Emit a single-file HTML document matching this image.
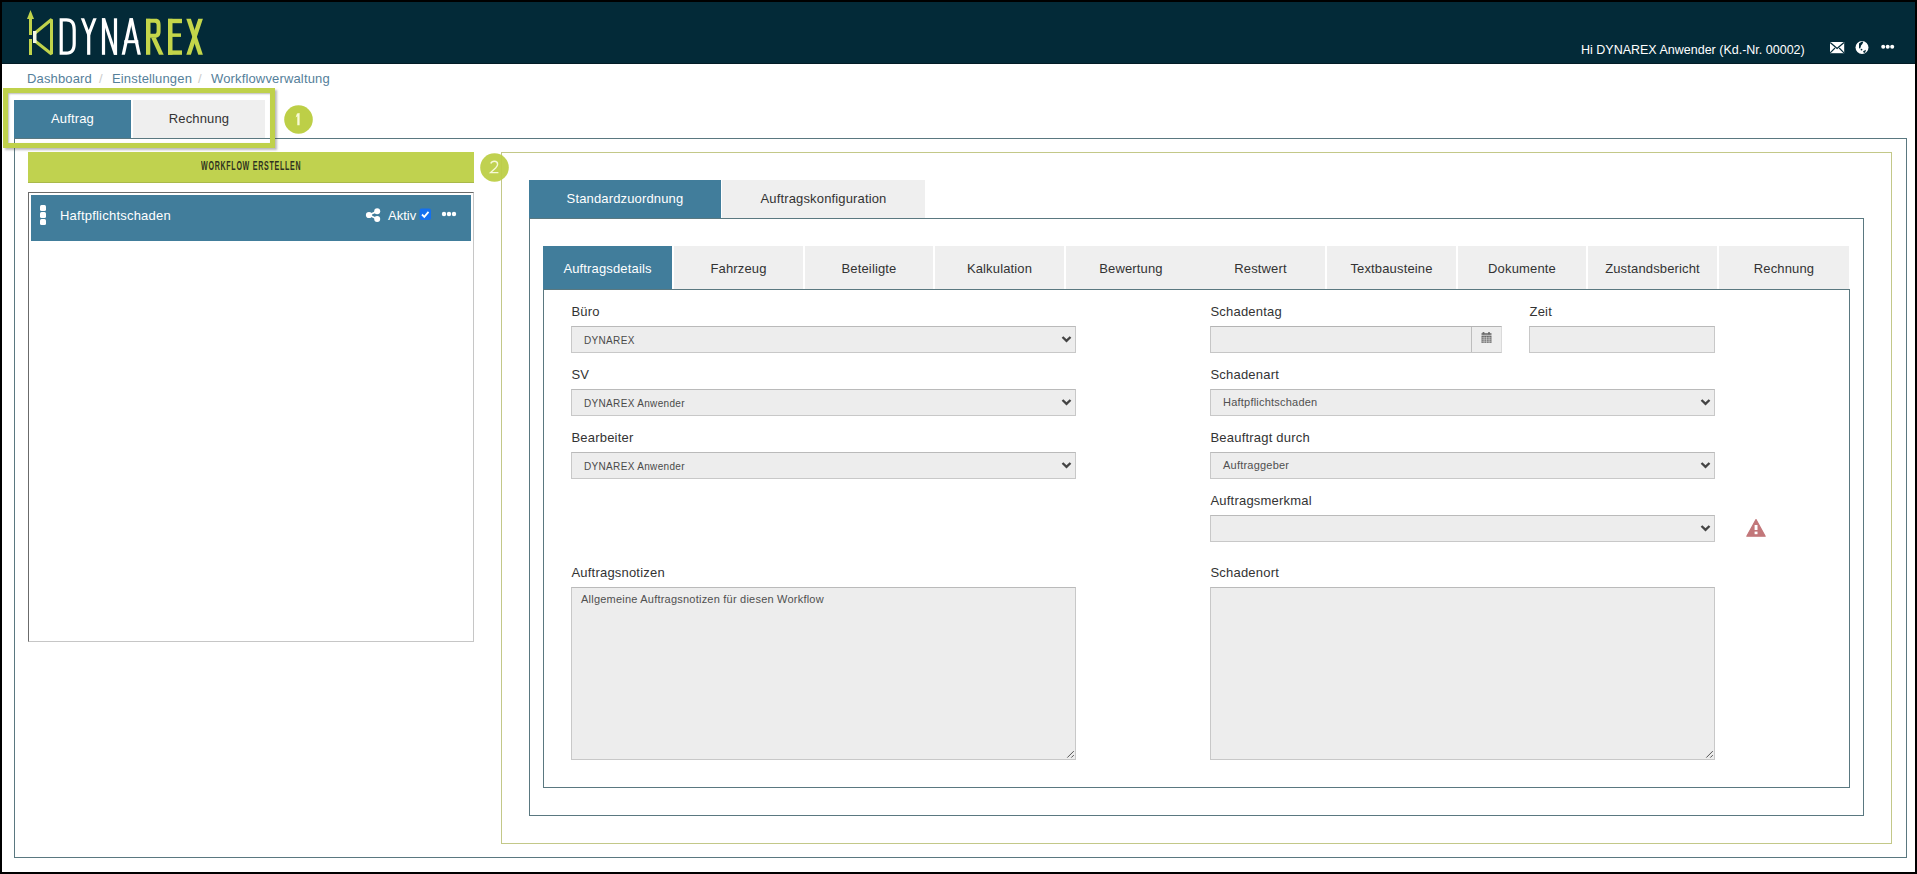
<!DOCTYPE html>
<html><head><meta charset="utf-8">
<style>
*{box-sizing:border-box;margin:0;padding:0}
html,body{width:1917px;height:874px;overflow:hidden;background:#fff;font-family:"Liberation Sans",sans-serif;color:#333;position:relative}
.a{position:absolute}
.frame{left:0;top:0;width:1917px;height:874px;border:2px solid #000;z-index:50;pointer-events:none}
.hdr{left:0;top:0;width:1917px;height:64px;background:#032a38;border-bottom:1px solid #021c26}
.hdrtxt{left:1581px;top:43px;font-size:12.5px;color:#fff;white-space:nowrap}
.bc{top:71px;font-size:13px;color:#55809a;white-space:nowrap;letter-spacing:.15px}
.bcs{top:71px;font-size:13px;color:#ccc}
.tab{font-size:13px;text-align:center;white-space:nowrap;letter-spacing:.15px}
.act{background:#417d9b;color:#fff}
.ina{background:#efefef;color:#333}
.pnl{border:1px solid #5a7880}
.lbl{font-size:13px;color:#333;white-space:nowrap;margin-left:.5px;letter-spacing:.2px}
.sel{background:#ededed;border:1px solid #c8c8c8;border-top-color:#bababa}
.seltxt{font-size:10px;color:#4a4a4a;white-space:nowrap;margin-top:1px;letter-spacing:.33px}
.seltxt2{font-size:11px;color:#505050;white-space:nowrap;letter-spacing:.22px}
.badge{width:29px;height:29px;border-radius:50%;background:#bdcf47;color:#f6f9d8;font-size:17px;text-align:center;line-height:29px}
</style></head><body>
<div class="a frame"></div>
<div class="a hdr"></div>
<!-- logo -->
<svg class="a" style="left:0;top:0" width="220" height="64" viewBox="0 0 220 64">
  <g stroke="#c0d34b" fill="none" stroke-width="3" stroke-linejoin="bevel">
    <line x1="30.5" y1="17" x2="30.5" y2="55"/>
    <polyline points="35,33 51.5,19.5 51.5,54 35,41"/>
  </g>
  <polygon points="30.5,10 27,19 34,19" fill="#c0d34b"/>
  <rect x="29" y="35" width="3" height="4" fill="#032a38"/>
  <rect x="33" y="31" width="3.5" height="12" fill="#f4f6e6"/>
  <defs><clipPath id="lc"><rect x="0" y="18.3" width="220" height="36.5"/></clipPath></defs>
  <g fill="#fff">
    <path fill-rule="evenodd" d="M59.6 18.3 H66.5 C73 18.3 75.8 22.5 75.8 29.5 V43.5 C75.8 50.5 73 54.8 66.5 54.8 H59.6 Z M62.8 21.5 H66.2 C71 21.5 72.6 24.3 72.6 30 V43 C72.6 48.8 71 51.6 66.2 51.6 H62.8 Z"/>
    <rect x="87.1" y="33" width="3.2" height="21.8"/>
    <polygon points="101.9,18.3 105.1,18.3 117.1,54.8 113.9,54.8"/>
    <rect x="101.9" y="18.3" width="3.2" height="36.5"/>
    <rect x="113.9" y="18.3" width="3.2" height="36.5"/>
    <polygon points="121.6,54.8 124.9,54.8 132.9,18.3 129.6,18.3"/>
    <polygon points="129.6,18.3 132.9,18.3 140.9,54.8 137.6,54.8"/>
    <rect x="124.3" y="40.2" width="14" height="3"/>
  </g>
  <g clip-path="url(#lc)" stroke="#fff" stroke-width="3.2" fill="none">
    <path d="M80.9 14 L88.7 34.5 L96.6 14"/>
  </g>
  <g fill="#c4d64a">
    <path fill-rule="evenodd" d="M146 18.8 H155.5 C159.5 18.8 160.6 21.3 160.6 25.3 V31.3 C160.6 35.5 159 37.8 155 37.8 H146 Z M150.3 22.8 H154.6 C156.2 22.8 156.6 23.6 156.6 25.5 V31 C156.6 33 156 33.8 154.4 33.8 H150.3 Z"/>
    <rect x="146" y="18.8" width="4.3" height="36"/>
    <polygon points="151.2,37.8 155.7,37.2 163.7,54.8 159,54.8"/>
    <rect x="168" y="18.8" width="4.5" height="36"/>
    <rect x="168" y="18.8" width="14" height="4.4"/>
    <rect x="168" y="33.4" width="13" height="3.5"/>
    <rect x="168" y="50.4" width="14" height="4.4"/>
    <polygon points="186.3,18.8 190.9,18.8 202.9,54.8 198.3,54.8"/>
    <polygon points="198.3,18.8 202.9,18.8 190.9,54.8 186.3,54.8"/>
  </g>
</svg>
<div class="a hdrtxt">Hi DYNAREX Anwender (Kd.-Nr. 00002)</div>
<!-- header icons -->
<svg class="a" style="left:1825px;top:35px" width="75" height="25" viewBox="0 0 75 25">
  <rect x="5" y="7" width="14.2" height="11.2" fill="#fff"/>
  <polyline points="5.2,7.4 12.1,13.4 19,7.4" fill="none" stroke="#032a38" stroke-width="1.3"/>
  <line x1="5.2" y1="17.8" x2="10" y2="13" stroke="#032a38" stroke-width="1.1"/>
  <line x1="19" y1="17.8" x2="14.2" y2="13" stroke="#032a38" stroke-width="1.1"/>
  <circle cx="37" cy="12.5" r="6.5" fill="#fff"/>
  <path d="M34 8.5 L36.2 7 L37.2 6.2 L38.2 7.6 L37 9.5 L36.2 10.2 L35.2 13.6 L34 13.2 Z" fill="#032a38"/>
  <circle cx="36.5" cy="14.6" r="0.9" fill="#032a38"/>
  <path d="M38 16.2 L41 14.8 L40.2 17.6 L39 18 Z" fill="#032a38"/>
  <circle cx="58.2" cy="11.7" r="2" fill="#fff"/><circle cx="62.7" cy="11.7" r="2" fill="#fff"/><circle cx="67.2" cy="11.7" r="2" fill="#fff"/>
</svg>

<!-- breadcrumb -->
<div class="a bc" style="left:27px">Dashboard</div>
<div class="a bcs" style="left:99px">/</div>
<div class="a bc" style="left:112px">Einstellungen</div>
<div class="a bcs" style="left:198px">/</div>
<div class="a bc" style="left:211px">Workflowverwaltung</div>

<!-- outer main panel -->
<div class="a pnl" style="left:14px;top:138px;width:1893px;height:720px"></div>
<!-- top tabs -->
<div class="a tab act" style="left:14px;top:100px;width:117px;height:38px;line-height:38px">Auftrag</div>
<div class="a tab ina" style="left:133px;top:100px;width:132px;height:38px;line-height:38px">Rechnung</div>
<!-- annotation box 1 -->
<div class="a" style="left:3px;top:88px;width:272px;height:60px;border:5px solid #bfd14b;box-shadow:2px 2px 2px rgba(60,60,60,.35), inset 1px 1px 2px rgba(0,0,0,.28)"></div>
<svg class="a" style="left:284px;top:105px" width="29" height="29" viewBox="0 0 29 29"><circle cx="14.5" cy="14.5" r="14.3" fill="#bdcf47"/><path d="M13 8.6 L15.6 8 V20.2 H13.3 V11.2 L11.6 12.4 Z" fill="#f8fbd6"/></svg>

<!-- left column -->
<div class="a" style="left:28px;top:152px;width:446px;height:31px;background:#c0d24f;border-bottom:1px solid #a9b94a"></div>
<div class="a" style="left:201px;top:159px;font-size:12.5px;font-weight:bold;color:#2f3320;white-space:nowrap;letter-spacing:1.3px;transform-origin:0 0;transform:scaleX(.565)">WORKFLOW ERSTELLEN</div>
<div class="a" style="left:28px;top:192px;width:446px;height:450px;border:1px solid;border-color:#6b6b6b #c6c6c6 #c6c6c6 #6b6b6b"></div>
<div class="a" style="left:31px;top:195px;width:440px;height:46px;background:#417d9b"></div>
<div class="a" style="left:40px;top:205px;width:6px;height:6px;background:#fff;border-radius:1.5px"></div>
<div class="a" style="left:40px;top:212px;width:6px;height:6px;background:#fff;border-radius:1.5px"></div>
<div class="a" style="left:40px;top:219px;width:6px;height:6px;background:#fff;border-radius:1.5px"></div>
<div class="a" style="left:60px;top:208px;font-size:13px;color:#fff;white-space:nowrap;letter-spacing:.22px">Haftpflichtschaden</div>
<svg class="a" style="left:364px;top:206px" width="18" height="17" viewBox="0 0 18 17">
  <g fill="#fff"><circle cx="13.2" cy="5.3" r="3"/><circle cx="5" cy="9" r="3.1"/><circle cx="13.2" cy="12.9" r="3"/></g>
  <g stroke="#fff" stroke-width="1.7"><line x1="5" y1="9" x2="13.2" y2="5.3"/><line x1="5" y1="9" x2="13.2" y2="12.9"/></g>
</svg>
<div class="a" style="left:388px;top:208px;font-size:13px;color:#fff;white-space:nowrap">Aktiv</div>
<svg class="a" style="left:419px;top:208px" width="13" height="13" viewBox="0 0 13 13">
  <rect x="0.5" y="0.5" width="11.5" height="11.5" rx="2" fill="#1570ef"/>
  <polyline points="3,6.5 5.3,8.8 9.5,3.8" fill="none" stroke="#fff" stroke-width="1.8"/>
</svg>
<svg class="a" style="left:440px;top:210px" width="18" height="8" viewBox="0 0 18 8">
  <g fill="#fff"><circle cx="4" cy="4" r="2.2"/><circle cx="9" cy="4" r="2.2"/><circle cx="14" cy="4" r="2.2"/></g>
</svg>

<!-- annotation box 2 -->
<div class="a" style="left:501px;top:152px;width:1391px;height:692px;border:1px solid #c3c888"></div>
<svg class="a" style="left:480px;top:153px" width="29" height="29" viewBox="0 0 29 29"><circle cx="14.5" cy="14.5" r="14.3" fill="#bdcf47" fill-opacity=".95"/><path d="M10.8 10.6 Q11.6 8.3 14.3 8.3 Q17.6 8.3 17.6 11.2 Q17.6 13 15.6 15 L10.6 19.6 H18.4" fill="none" stroke="#f6f9d8" stroke-width="1.4"/></svg>

<!-- inner tab panel -->
<div class="a pnl" style="left:529px;top:218px;width:1335px;height:598px"></div>
<div class="a tab act" style="left:529px;top:180px;width:192px;height:38px;line-height:38px">Standardzuordnung</div>
<div class="a tab ina" style="left:722px;top:180px;width:203px;height:38px;line-height:38px">Auftragskonfiguration</div>

<!-- second level -->
<div class="a pnl" style="left:543px;top:289px;width:1307px;height:499px"></div>
<div class="a tab act" style="left:543px;top:246px;width:129px;height:43px;line-height:43px;padding-top:1px">Auftragsdetails</div>
<div class="a tab ina" style="left:674px;top:246px;width:129px;height:43px;line-height:43px;padding-top:1px">Fahrzeug</div>
<div class="a tab ina" style="left:805px;top:246px;width:128px;height:43px;line-height:43px;padding-top:1px">Beteiligte</div>
<div class="a tab ina" style="left:935px;top:246px;width:129px;height:43px;line-height:43px;padding-top:1px">Kalkulation</div>
<div class="a tab ina" style="left:1066px;top:246px;width:259px;height:43px;line-height:43px;padding-top:1px"></div>
<div class="a tab" style="left:1066px;top:246px;width:130px;height:43px;line-height:43px;padding-top:1px">Bewertung</div>
<div class="a tab" style="left:1196px;top:246px;width:129px;height:43px;line-height:43px;padding-top:1px">Restwert</div>
<div class="a tab ina" style="left:1327px;top:246px;width:129px;height:43px;line-height:43px;padding-top:1px">Textbausteine</div>
<div class="a tab ina" style="left:1458px;top:246px;width:128px;height:43px;line-height:43px;padding-top:1px">Dokumente</div>
<div class="a tab ina" style="left:1588px;top:246px;width:129px;height:43px;line-height:43px;padding-top:1px">Zustandsbericht</div>
<div class="a tab ina" style="left:1719px;top:246px;width:130px;height:43px;line-height:43px;padding-top:1px">Rechnung</div>

<!-- form left -->
<div class="a lbl" style="left:571px;top:304px">Büro</div>
<div class="a sel" style="left:571px;top:326px;width:505px;height:27px"></div>
<div class="a seltxt" style="left:584px;top:334px">DYNAREX</div>
<div class="a lbl" style="left:571px;top:367px">SV</div>
<div class="a sel" style="left:571px;top:389px;width:505px;height:27px"></div>
<div class="a seltxt" style="left:584px;top:397px">DYNAREX Anwender</div>
<div class="a lbl" style="left:571px;top:430px">Bearbeiter</div>
<div class="a sel" style="left:571px;top:452px;width:505px;height:27px"></div>
<div class="a seltxt" style="left:584px;top:460px">DYNAREX Anwender</div>
<div class="a lbl" style="left:571px;top:565px">Auftragsnotizen</div>
<div class="a sel" style="left:571px;top:587px;width:505px;height:173px"></div>
<div class="a seltxt2" style="left:581px;top:593px">Allgemeine Auftragsnotizen für diesen Workflow</div>

<!-- form right -->
<div class="a lbl" style="left:1210px;top:304px">Schadentag</div>
<div class="a sel" style="left:1210px;top:326px;width:292px;height:27px;border-color:#b4b4b4 #dadada #c6c6c6 #c6c6c6"></div>
<div class="a" style="left:1471px;top:327px;width:1px;height:25px;background:#bdbdbd"></div>
<svg class="a" style="left:1480px;top:331px" width="13" height="13" viewBox="0 0 13 13">
  <g fill="#6a6a6a"><rect x="2.5" y="1" width="2" height="2.5" rx=".8"/><rect x="8" y="1" width="2" height="2.5" rx=".8"/><rect x="1.5" y="2.2" width="10" height="1.6"/><rect x="1.5" y="4.6" width="10" height="7.4"/></g>
  <g fill="#e6e6e6"><rect x="1.5" y="6.6" width="10" height=".6"/><rect x="1.5" y="8.6" width="10" height=".6"/><rect x="1.5" y="10.6" width="10" height=".6"/><rect x="3.8" y="5.4" width=".5" height="6.6"/><rect x="6.3" y="5.4" width=".5" height="6.6"/><rect x="8.8" y="5.4" width=".5" height="6.6"/></g>
</svg>
<div class="a lbl" style="left:1529px;top:304px">Zeit</div>
<div class="a sel" style="left:1529px;top:326px;width:186px;height:27px"></div>
<div class="a lbl" style="left:1210px;top:367px">Schadenart</div>
<div class="a sel" style="left:1210px;top:389px;width:505px;height:27px"></div>
<div class="a seltxt2" style="left:1223px;top:396px">Haftpflichtschaden</div>
<div class="a lbl" style="left:1210px;top:430px">Beauftragt durch</div>
<div class="a sel" style="left:1210px;top:452px;width:505px;height:27px"></div>
<div class="a seltxt2" style="left:1223px;top:459px">Auftraggeber</div>
<div class="a lbl" style="left:1210px;top:493px">Auftragsmerkmal</div>
<div class="a sel" style="left:1210px;top:515px;width:505px;height:27px"></div>
<svg class="a" style="left:1745px;top:518px" width="22" height="20" viewBox="0 0 22 20">
  <path d="M11 1.6 L20.2 18.2 H1.8 Z" fill="#c2777a" stroke="#c2777a" stroke-width="1.2" stroke-linejoin="round"/>
  <rect x="9.6" y="7" width="2.9" height="5" fill="#fff"/><rect x="9.6" y="13.6" width="2.9" height="2.6" fill="#fff"/>
</svg>
<div class="a lbl" style="left:1210px;top:565px">Schadenort</div>
<div class="a sel" style="left:1210px;top:587px;width:505px;height:173px"></div>

<!-- chevrons -->
<svg class="a" style="left:0;top:0" width="1917" height="874" viewBox="0 0 1917 874">
  <g fill="none" stroke="#444" stroke-width="2.4">
    <polyline points="1062.5,337.0 1066.5,340.8 1070.5,337.0"/>
    <polyline points="1062.5,400.0 1066.5,403.8 1070.5,400.0"/>
    <polyline points="1062.5,463.0 1066.5,466.8 1070.5,463.0"/>
    <polyline points="1701.5,400.0 1705.5,403.8 1709.5,400.0"/>
    <polyline points="1701.5,463.0 1705.5,466.8 1709.5,463.0"/>
    <polyline points="1701.5,526.0 1705.5,529.8 1709.5,526.0"/>
  </g>
  <g stroke="#555" stroke-width="1">
    <line x1="1067.3" y1="757.6" x2="1073.8" y2="751.1"/><line x1="1071.3" y1="757.6" x2="1073.8" y2="755.1"/>
    <line x1="1706.3" y1="757.6" x2="1712.8" y2="751.1"/><line x1="1710.3" y1="757.6" x2="1712.8" y2="755.1"/>
  </g>
</svg>
</body></html>
